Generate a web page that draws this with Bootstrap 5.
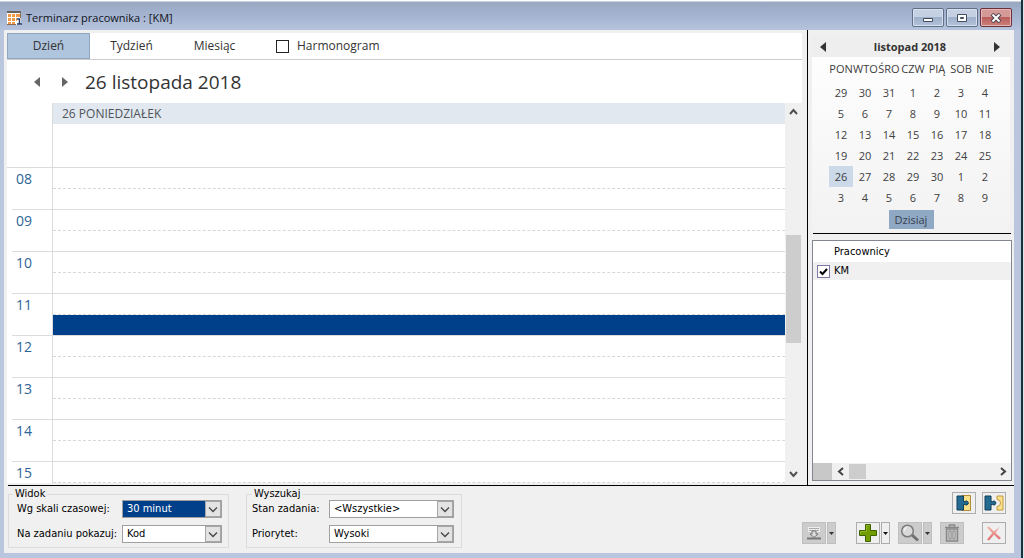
<!DOCTYPE html>
<html lang="pl">
<head>
<meta charset="utf-8">
<meta name="viewport" content="width=device-width, initial-scale=1">
<title>Terminarz pracownika : [KM]</title>
<link href="https://cdn.jsdelivr.net/npm/bootstrap@5.3.0/dist/css/bootstrap.min.css" rel="stylesheet">
<style>
  :root { --face: #f0f0f0; --rule: #dcdcdc; --frame: #b9c6de; }
  body { font-family: "Open Sans", "Noto Sans", sans-serif; font-size: 12px; line-height: 16px; color: #333; background: #dde3e8; }
  button, select, input { font: inherit; color: inherit; border-radius: 0; }
  svg { display: block; flex: none; }
  .window-frame { background: var(--frame); border-right: 2px solid #16323c; margin-right: 1px; padding: 0 7px 5px 4px; }
  .title-strip { height: 30px; margin: 0 -7px 0 -4px; padding: 5px 9px 0 7px; background: linear-gradient(#fff 0 1px, #99a8c1 2px, #a4b3cf 50%, #b5c3dd); color: #10141c; }
  .title-text { font-size: 11px; }
  .caption-set { gap: 2px; }
  .caption-btn { width: 32px; height: 19px; padding: 0; border: 1px solid #5f6f88; border-radius: 2px; background: linear-gradient(#c5d0e3 0 48%, #9fb0ca 50%, #b3c2da); box-shadow: inset 0 0 0 1px #d8e1ef; }
  .caption-btn.close-btn { border-color: #6d3038; background: linear-gradient(#d59a97 0 48%, #bb5f5c 50%, #c98079); box-shadow: inset 0 0 0 1px #e2b9b8; }
  .client-area { background: var(--face); }
  .schedule { margin: 3px 5px 2px 3px; background: #fff; }
  .view-tabs { height: 27px; border-bottom: 1px solid #ccc; }
  .view-tab { width: 83px; padding: 0; border: 1px solid transparent; background: none; }
  .view-tab.active { background: #afc4dd; border-color: #8fa5c0; }
  .outline-check { appearance: none; width: 13px; height: 13px; margin: 0; border: 1px solid #222; background: #fff; }
  .date-head { height: 43px; padding-left: 26px; font-size: 19px; line-height: 24px; }
  .arrow-btn { border: 0; background: none; padding: 0; }
  .day-name { height: 21px; margin-left: 45px; padding: 3px 9px 0; border-left: 1px solid var(--rule); background: #e1e8f0; color: #505458; }
  .all-day { height: 44px; border-bottom: 1px solid var(--rule); }
  .all-day div { margin-left: 45px; height: 43px; border-left: 1px solid var(--rule); }
  .hour-row { height: 42px; flex: none; margin-left: 5px; border-bottom: 1px solid var(--rule); }
  .hour-label { width: 40px; padding: 2px 0 0 4px; font-size: 14px; line-height: 18px; color: #2e6496; }
  .hour-slots { border-left: 1px solid var(--rule); }
  .hour-slots div { height: 21px; }
  .hour-slots div:first-child { border-bottom: 1px dashed #d8d8d8; }
  .hour-slots .picked { background: #003f8a; height: 20px; }
  .v-scroll { width: 17px; background: var(--face); padding: 5px 0; }
  .v-thumb { height: 108px; margin: 119px 1px 0 1px; background: #cdcdcd; }
  .side { width: 207px; border-left: 1px solid #000; padding: 6px 2px 4px 4px; }
  .calendar { background: linear-gradient(#fff, #f2f2f2); padding-bottom: 4px; margin-right: 2px; }
  .month-head { height: 21px; background: #eee; padding: 0 10px 0 8px; font-size: 11px; }
  .month-grid { width: 168px; margin: 0 0 2px 17px; table-layout: fixed; text-align: center; color: #404040; }
  .month-grid th { height: 25px; padding: 0 0 2px; font-weight: 400; font-size: 11px; white-space: nowrap; }
  .month-grid td { height: 21px; padding: 0; font-size: 11px; }
  .month-grid .today-cell { background: #ccd9e8; }
  .today-btn { width: 45px; height: 19px; padding: 0; border: 0; background: #8fa8c4; color: #36404e; font-size: 11px; line-height: 17px; }
  .split-line { height: 1px; background: #000; margin: 0 1px 6px 1px; }
  .staff-list, .options { font-family: "DejaVu Sans Condensed", "DejaVu Sans", sans-serif; font-size: 11px; line-height: 14px; color: #000; }
  .staff-list { background: #fff; border: 1px solid #828790; }
  .staff-head { height: 21px; padding: 4px 0 0 21px; }
  .staff-row { height: 18px; padding-left: 4px; gap: 4px; background: #f0f0f0; }
  .box-check { appearance: none; width: 13px; height: 13px; margin: 0; border: 1px solid #7d78a8; background: #fff; }
  .box-check:checked { background: #fff url("data:image/svg+xml,%3Csvg xmlns='http://www.w3.org/2000/svg' viewBox='0 0 11 11'%3E%3Cpath d='M2 5.5 4.5 8 9 3' fill='none' stroke='%23000' stroke-width='2'/%3E%3C/svg%3E"); }
  .h-scroll { height: 17px; background: #f0f0f0; padding-right: 3px; }
  .h-block { width: 19px; height: 17px; background: #c8c8c8; }
  .h-thumb { width: 17px; height: 15px; background: #cdcdcd; }
  .options { border-top: 1px solid #000; margin-left: 4px; padding: 2px 8px 5px 0; }
  .option-group { width: 221px; height: 60px; border: 1px solid #dcdcdc; margin: 0; padding: 0 6px 3px 8px; }
  .option-group legend { float: none; width: auto; margin: 0 0 0 -4px; padding: 0 2px; font-size: 11px; line-height: 12px; }
  .find-group { width: 216px; margin-left: 17px; padding: 0 7px 3px 5px; }
  .find-group legend { margin-left: 0; }
  .option-line { height: 18px; }
  .option-line + .option-line { margin-top: 7px; }
  .combo { appearance: none; width: 100px; height: 18px; padding: 0 20px 0 4px; border: 1px solid #a0a0a0; background: #fff url("data:image/svg+xml,%3Csvg xmlns='http://www.w3.org/2000/svg' width='16' height='16'%3E%3Cpath d='M0 0h16v16H0z' fill='%23a6a6a6'/%3E%3Cpath d='M1 1h14v14H1z' fill='%23e3e3e3'/%3E%3Cpath d='M4 6.500 8 10.500 12 6.500' fill='none' stroke='%23444' stroke-width='1.300'/%3E%3C/svg%3E") right center no-repeat; }
  .combo.chosen { background-color: #003f8a; color: #fff; }
  .combo option { color: #000; background: #fff; }
  .combo.wide { width: 125px; }
  .tool { width: 24px; height: 22px; padding: 0; border: 1px solid #adadad; background: #efefef; display: flex; align-items: center; justify-content: center; }
  .tool.drop { width: 9px; margin-left: 1px; }
  .tool:disabled { background: #ccc; border-color: #bfbfbf; }
  .pair-line { gap: 6px; }
  .tool.add-tool { margin-left: 20px; }
  .tool.close-tool { margin-left: 18px; }
</style>
</head>
<body>
<div class="window-frame vh-100 d-flex flex-column overflow-hidden">
  <header class="title-strip d-flex align-items-center flex-shrink-0">
    <svg width="15" height="14" viewBox="0 0 15 14"><path d="M0 0h14v14H0z" fill="#fff"/><path d="M0 0h14v2H0z" fill="#68625e"/><path d="M1 3h3v3H1zM5 3h3v3H5zM9 3h4v3H9zM1 7h3v3H1zM5 7h3v3H5zM9 7h1v3H9zM1 11h3v2H1zM5 11h3v2H5z" fill="#f09a4c"/><path d="M13.500 0v7M0 13.500h9" stroke="#8a6a50"/><path d="M10 8h2.500v5M10 13h5" fill="none" stroke="#243c68" stroke-width="1.500"/></svg>
    <span class="title-text ms-1 flex-grow-1">Terminarz pracownika : [KM]</span>
    <div class="caption-set d-flex">
      <button class="caption-btn d-grid justify-content-center align-content-center" aria-label="Minimalizuj"><svg width="12" height="10"><path d="M1.500 5.500h9v3h-9z" fill="#fff" stroke="#434d5f"/></svg></button>
      <button class="caption-btn d-grid justify-content-center align-content-center" aria-label="Maksymalizuj"><svg width="12" height="10"><path d="M1.500 1.500h9v7h-9z" fill="#fff" stroke="#434d5f"/><path d="M4.500 4.500h3v1h-3z" fill="#aaa" stroke="#434d5f"/></svg></button>
      <button class="caption-btn close-btn d-grid justify-content-center align-content-center" aria-label="Zamknij"><svg width="12" height="10"><path d="M2 1l8 8M10 1 2 9" stroke="#4b4350" stroke-width="4"/><path d="M2.500 1.500l7 7M9.500 1.500l-7 7" stroke="#fff" stroke-width="2"/></svg></button>
    </div>
  </header>

  <div class="client-area d-flex flex-column flex-grow-1 overflow-hidden">
    <div class="d-flex flex-grow-1 overflow-hidden">
      <main class="schedule d-flex flex-column flex-grow-1 overflow-hidden">
        <nav class="view-tabs d-flex flex-shrink-0" aria-label="Widok kalendarza">
          <button class="view-tab active">Dzień</button>
          <button class="view-tab">Tydzień</button>
          <button class="view-tab">Miesiąc</button>
          <div class="d-flex align-items-center ms-3 ps-1">
            <input type="checkbox" class="outline-check" id="harm"><label for="harm" class="ms-2">Harmonogram</label>
          </div>
        </nav>
        <div class="date-head d-flex align-items-center flex-shrink-0">
          <button class="arrow-btn" aria-label="Poprzedni dzień"><svg width="8" height="10"><path d="M7 0v10L1 5z" fill="#666"/></svg></button>
          <button class="arrow-btn ms-3 ps-1" aria-label="Następny dzień"><svg width="8" height="10"><path d="M1 0v10l6-5z" fill="#666"/></svg></button>
          <span class="ms-3">26 listopada 2018</span>
        </div>
        <div class="d-flex flex-grow-1 overflow-hidden">
          <div class="d-flex flex-column flex-grow-1 overflow-hidden">
            <div class="day-name flex-shrink-0">26 PONIEDZIAŁEK</div>
            <div class="all-day flex-shrink-0"><div></div></div>
            <div class="hour-row d-flex"><div class="hour-label">08</div><div class="hour-slots flex-grow-1"><div></div><div></div></div></div>
            <div class="hour-row d-flex"><div class="hour-label">09</div><div class="hour-slots flex-grow-1"><div></div><div></div></div></div>
            <div class="hour-row d-flex"><div class="hour-label">10</div><div class="hour-slots flex-grow-1"><div></div><div></div></div></div>
            <div class="hour-row d-flex"><div class="hour-label">11</div><div class="hour-slots flex-grow-1"><div></div><div class="picked"></div></div></div>
            <div class="hour-row d-flex"><div class="hour-label">12</div><div class="hour-slots flex-grow-1"><div></div><div></div></div></div>
            <div class="hour-row d-flex"><div class="hour-label">13</div><div class="hour-slots flex-grow-1"><div></div><div></div></div></div>
            <div class="hour-row d-flex"><div class="hour-label">14</div><div class="hour-slots flex-grow-1"><div></div><div></div></div></div>
            <div class="hour-row d-flex"><div class="hour-label">15</div><div class="hour-slots flex-grow-1"><div></div><div></div></div></div>
          </div>
          <div class="v-scroll d-flex flex-column flex-shrink-0">
            <svg class="mx-auto" width="9" height="8"><path d="M1 6l3.500-4L8 6" fill="none" stroke="#505050" stroke-width="2"/></svg>
            <div class="v-thumb"></div>
            <svg class="mx-auto mt-auto" width="9" height="8"><path d="M1 2l3.500 4L8 2" fill="none" stroke="#505050" stroke-width="2"/></svg>
          </div>
        </div>
      </main>

      <aside class="side d-flex flex-column flex-shrink-0">
        <div class="calendar">
          <div class="month-head d-flex align-items-center justify-content-between">
            <button class="arrow-btn" aria-label="Poprzedni miesiąc"><svg width="6" height="10"><path d="M6 0v10L0 5z" fill="#333"/></svg></button>
            <strong>listopad 2018</strong>
            <button class="arrow-btn" aria-label="Następny miesiąc"><svg width="6" height="10"><path d="M0 0v10l6-5z" fill="#333"/></svg></button>
          </div>
          <table class="month-grid">
            <thead><tr><th>PON</th><th>WTO</th><th>ŚRO</th><th>CZW</th><th>PIĄ</th><th>SOB</th><th>NIE</th></tr></thead>
            <tbody>
              <tr><td>29</td><td>30</td><td>31</td><td>1</td><td>2</td><td>3</td><td>4</td></tr>
              <tr><td>5</td><td>6</td><td>7</td><td>8</td><td>9</td><td>10</td><td>11</td></tr>
              <tr><td>12</td><td>13</td><td>14</td><td>15</td><td>16</td><td>17</td><td>18</td></tr>
              <tr><td>19</td><td>20</td><td>21</td><td>22</td><td>23</td><td>24</td><td>25</td></tr>
              <tr><td class="today-cell">26</td><td>27</td><td>28</td><td>29</td><td>30</td><td>1</td><td>2</td></tr>
              <tr><td>3</td><td>4</td><td>5</td><td>6</td><td>7</td><td>8</td><td>9</td></tr>
            </tbody>
          </table>
          <button class="today-btn d-block mx-auto">Dzisiaj</button>
        </div>
        <div class="split-line"></div>
        <section class="staff-list d-flex flex-column flex-grow-1">
          <div class="staff-head">Pracownicy</div>
          <div class="staff-row d-flex align-items-center"><input type="checkbox" class="box-check" id="km" checked><label for="km">KM</label></div>
          <div class="h-scroll d-flex align-items-center mt-auto">
            <div class="h-block"></div>
            <svg class="ms-1 me-1" width="9" height="9"><path d="M7 1 3 4.500 7 8" fill="none" stroke="#444" stroke-width="2"/></svg>
            <div class="h-thumb"></div>
            <svg class="ms-auto" width="9" height="9"><path d="M2 1l4 3.500L2 8" fill="none" stroke="#444" stroke-width="2"/></svg>
          </div>
        </section>
      </aside>
    </div>

    <footer class="options d-flex flex-shrink-0">
      <fieldset class="option-group">
        <legend>Widok</legend>
        <div class="option-line d-flex align-items-center"><label for="scale">Wg skali czasowej:</label><select id="scale" class="combo chosen ms-auto"><option>30 minut</option></select></div>
        <div class="option-line d-flex align-items-center"><label for="show">Na zadaniu pokazuj:</label><select id="show" class="combo ms-auto"><option>Kod</option></select></div>
      </fieldset>
      <fieldset class="option-group find-group">
        <legend>Wyszukaj</legend>
        <div class="option-line d-flex align-items-center"><label for="state">Stan zadania:</label><select id="state" class="combo wide ms-auto"><option>&lt;Wszystkie&gt;</option></select></div>
        <div class="option-line d-flex align-items-center"><label for="prio">Priorytet:</label><select id="prio" class="combo wide ms-auto"><option>Wysoki</option></select></div>
      </fieldset>
      <div class="ms-auto d-flex flex-column align-items-end gap-2 pt-1">
        <div class="pair-line d-flex">
          <button class="tool" aria-label="Dołącz"><svg width="16" height="16" viewBox="0 0 16 16"><path d="M6 .500h8.500v15H6z" fill="#fbe08a" stroke="#b48c35"/><path d="M1 1h6.500v5.500H9a2 2 0 1 1 0 3H7.500V15H1z" fill="#236b91" stroke="#123e58"/></svg></button>
          <button class="tool" aria-label="Odłącz"><svg width="20" height="16" viewBox="0 0 20 16"><path d="M13 1h6v14h-6v-3.500a3.500 3.500 0 1 0 0-7z" fill="#fbe08a" stroke="#c29a3d"/><path d="M1 1h6v5.500h1.500a2 2 0 1 1 0 3H7V15H1z" fill="#236b91" stroke="#123e58"/></svg></button>
        </div>
        <div class="d-flex">
          <button class="tool" disabled aria-label="Przenieś"><svg width="16" height="14" viewBox="0 0 16 14"><path d="M2 1h12v5H2z" fill="#eee"/><path d="M3 2.500h10M3 4.500h10" stroke="#aaa"/><path d="M6 5h4v3h2l-4 3.500L4 8h2z" fill="#ddd" stroke="#777"/><path d="M1 11.500h14v2H1z" fill="#777"/></svg></button>
          <button class="tool drop" disabled aria-label="Więcej: przenieś"><svg width="5" height="3"><path d="M0 0h5L2.500 3z" fill="#333"/></svg></button>
          <button class="tool add-tool" aria-label="Dodaj"><svg width="18" height="18" viewBox="0 0 18 18"><path d="M6.500.500h5v6h6v5h-6v6h-5v-6h-6v-5h6z" fill="#729c00" stroke="#3f6200"/><path d="M7.500 7.500v-6h3M1.500 10V7.500h6" fill="none" stroke="#92b52a"/></svg></button>
          <button class="tool drop" aria-label="Więcej: dodaj"><svg width="5" height="3"><path d="M0 0h5L2.500 3z" fill="#111"/></svg></button>
          <button class="tool ms-2" disabled aria-label="Podgląd"><svg width="20" height="18" viewBox="0 0 20 18"><path d="m12 11 6 5.500" stroke="#707070" stroke-width="3"/><circle cx="7.500" cy="7" r="5.800" fill="#d9d9d9" stroke="#7b7b7b" stroke-width="1.500"/><path d="M4 7a3.500 3.500 0 0 1 3-3.500" fill="none" stroke="#fff"/></svg></button>
          <button class="tool drop" disabled aria-label="Więcej: podgląd"><svg width="5" height="3"><path d="M0 0h5L2.500 3z" fill="#333"/></svg></button>
          <button class="tool ms-2" disabled aria-label="Usuń"><svg width="16" height="18" viewBox="0 0 16 18"><path d="M2.500 5h11v12h-11z" fill="#c6c6c6" stroke="#888" stroke-width="1.500"/><path d="M1 3.500h14M5.500 3V1h5v2" fill="none" stroke="#888" stroke-width="1.500"/><path d="M5 7h2v8H5zM9 7h2v8H9z" fill="#e4e4e4" stroke="#888"/></svg></button>
          <button class="tool close-tool" aria-label="Zamknij okno"><svg width="16" height="16" viewBox="0 0 16 16"><defs><linearGradient id="fade" x2="0" y2="1"><stop stop-color="#f3b8aa"/><stop offset="1" stop-color="#dd6c70"/></linearGradient></defs><path d="M1 2.500 3 1.500 8 6.500 14 1.500 9.500 8 15 13 13 14.500 8 9.800 3 15.500 1 14.500 6.300 8z" fill="url(#fade)"/></svg></button>
        </div>
      </div>
    </footer>
  </div>
</div>
<script src="https://cdn.jsdelivr.net/npm/bootstrap@5.3.0/dist/js/bootstrap.bundle.min.js"></script>
</body>
</html>
